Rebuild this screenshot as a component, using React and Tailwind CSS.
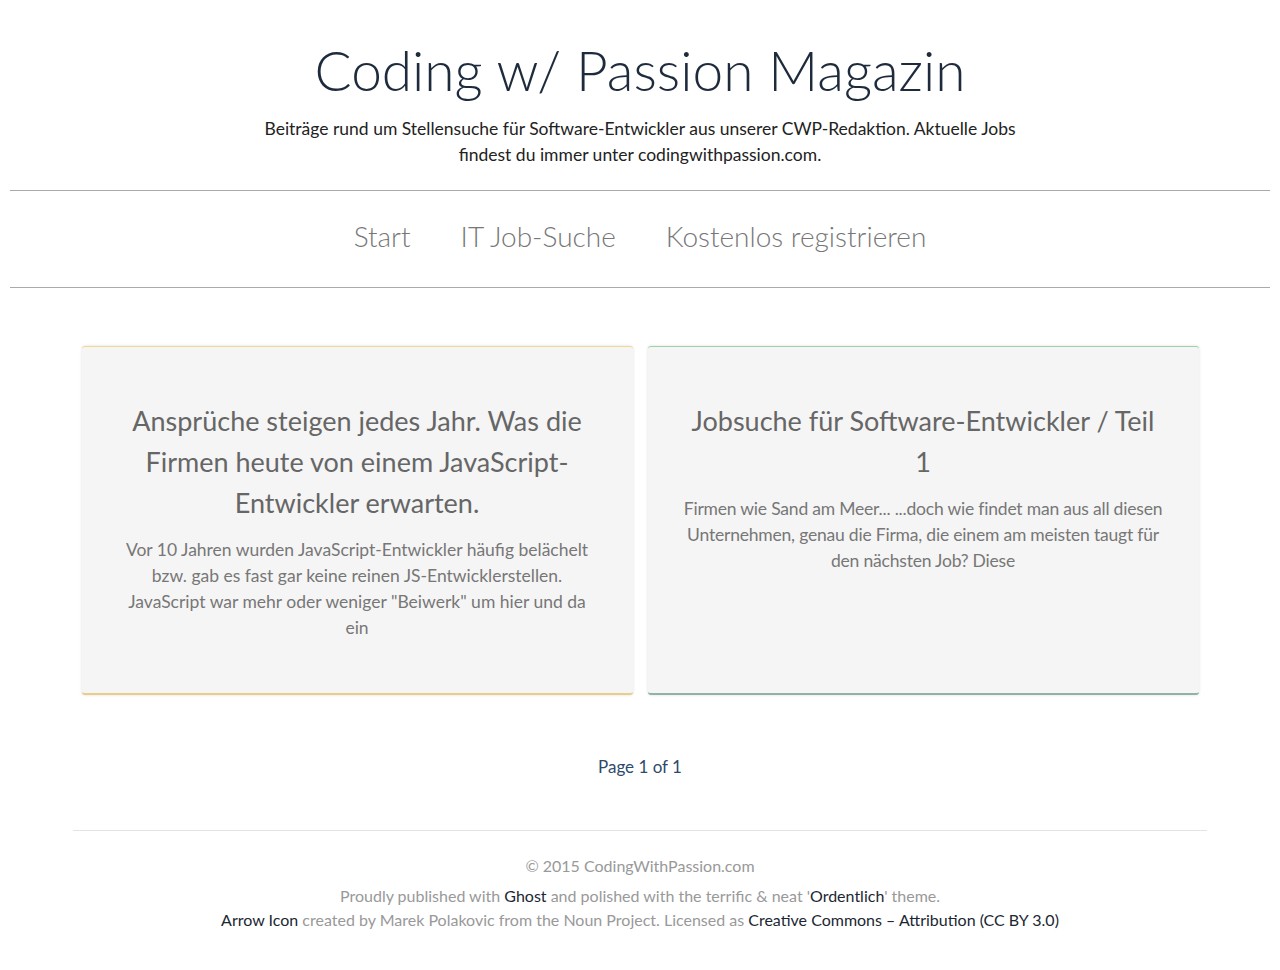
import React from 'react';

const posts = [
  {
    title: 'Ansprüche steigen jedes Jahr. Was die Firmen heute von einem JavaScript-Entwickler erwarten.',
    excerpt: 'Vor 10 Jahren wurden JavaScript-Entwickler häufig belächelt bzw. gab es fast gar keine reinen JS-Entwicklerstellen. JavaScript war mehr oder weniger "Beiwerk" um hier und da ein',
    top: 'border-t-[#f0d98c]',
    bottom: 'border-b-[#e6cf8a]',
    tight: '',
  },
  {
    title: 'Jobsuche für Software-Entwickler / Teil 1',
    excerpt: 'Firmen wie Sand am Meer... ...doch wie findet man aus all diesen Unternehmen, genau die Firma, die einem am meisten taugt für den nächsten Job? Diese',
    top: 'border-t-[#9ed3a8]',
    bottom: 'border-b-[#8fb3a5]',
    tight: 'tracking-[-0.2px]',
  },
];

export default function App() {
  return (
    <div className="min-h-screen bg-white font-['Lato','Open_Sans',sans-serif]">
      {/* Header */}
      <header className="pt-[35px] text-center">
        <h1 className="text-[55px] leading-[70px] font-light text-[#1e2b3c]">Coding w/ Passion Magazin</h1>
        <p className="mx-auto mt-[11px] max-w-[780px] text-[17.5px] leading-[26px] text-[#222]">
          Beiträge rund um Stellensuche für Software-Entwickler aus unserer CWP-Redaktion. Aktuelle Jobs findest du immer unter codingwithpassion.com.
        </p>
      </header>

      {/* Nav */}
      <nav className="mx-[10px] mt-[22px] border-y-[1.5px] border-[#aaa]">
        <ul className="flex h-[96px] items-center justify-center gap-[50px] pb-[6px] text-[28px] font-light text-[#777]">
          <li>Start</li>
          <li>IT Job-Suche</li>
          <li>Kostenlos registrieren</li>
        </ul>
      </nav>

      {/* Posts */}
      <main className="mx-auto mt-[58px] grid w-[1117px] grid-cols-2 gap-[15px]">
        {posts.map((p, i) => (
          <article
            key={i}
            className={`h-[349px] rounded-[3px] border-t border-b-2 bg-[#f5f5f5] px-[34px] pt-[53px] text-center shadow-[0_0_3px_rgba(0,0,0,0.14)] ${p.top} ${p.bottom}`}
          >
            <h2 className="px-[4px] text-[27px] leading-[41px] text-[#666]">{p.title}</h2>
            <p className={`mt-[14px] text-[17.5px] leading-[26px] text-[#777] ${p.tight}`}>{p.excerpt}</p>
          </article>
        ))}
      </main>

      <div className="mt-[59px] text-center text-[17px] text-[#2d4a6b]">Page 1 of 1</div>

      {/* Footer */}
      <footer className="mx-auto mt-[50px] w-[1134px] border-t border-[#e3e3e3] pt-[23px] pb-[30px] text-center text-[16px] text-[#999]">
        <p>© 2015 CodingWithPassion.com</p>
        <p className="mt-[6px] leading-[24px]">
          Proudly published with <a className="text-[#1b2733]">Ghost</a> and polished with the terrific &amp; neat '<a className="text-[#1b2733]">Ordentlich</a>' theme.
          <br />
          <a className="text-[#1b2733]">Arrow Icon</a> created by Marek Polakovic from the Noun Project. Licensed as <a className="text-[#1b2733]">Creative Commons – Attribution (CC BY 3.0)</a>
        </p>
      </footer>
    </div>
  );
}
